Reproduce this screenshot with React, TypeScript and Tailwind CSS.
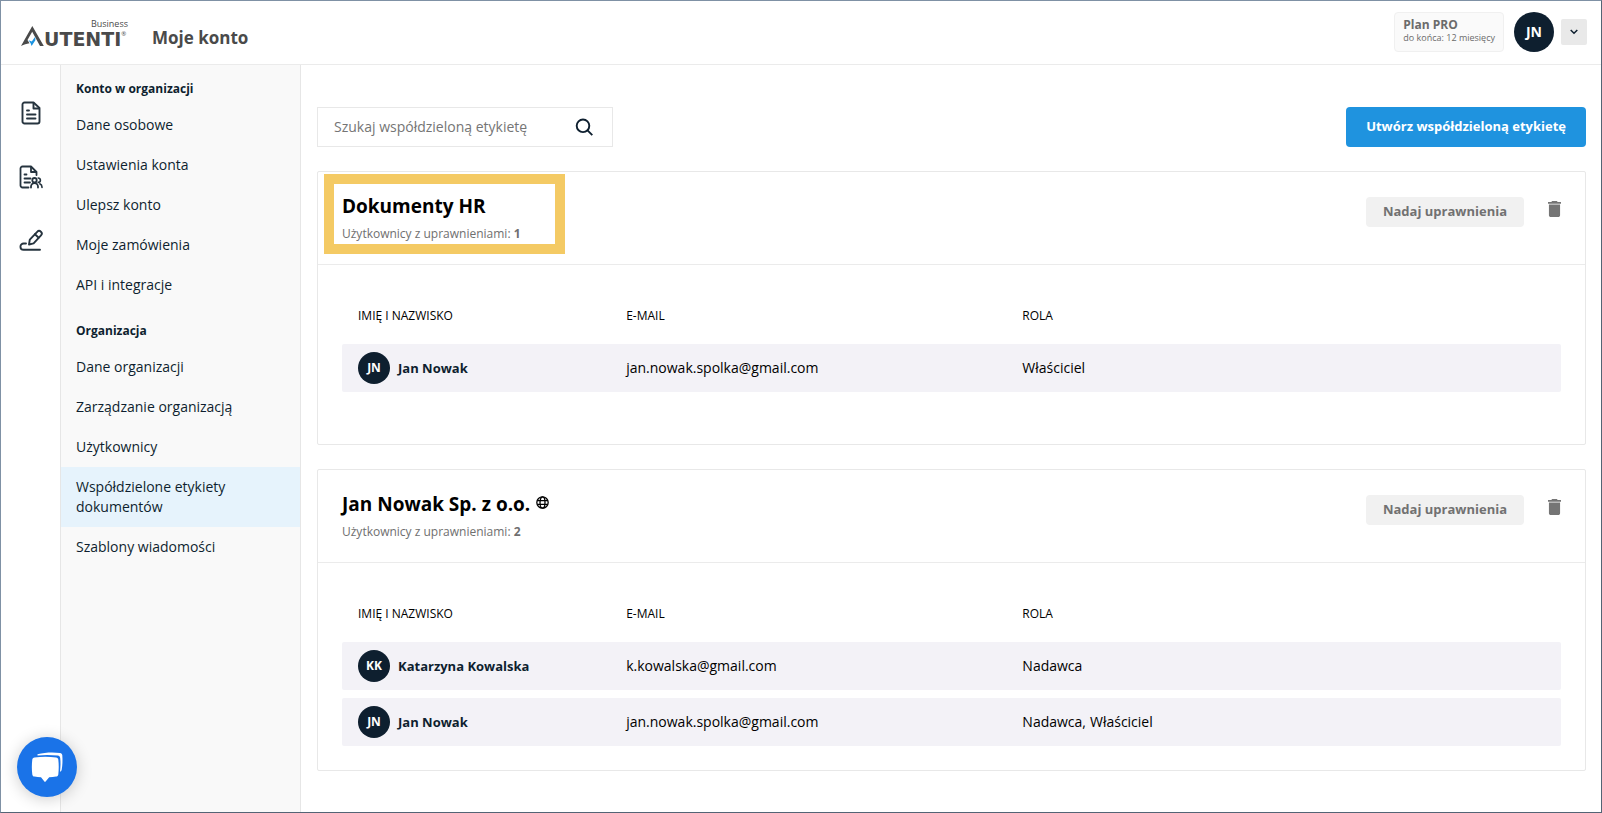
import { ReactNode } from "react";

type Member = { initials: string; name: string; email: string; role: ReactNode };

const accountLinks = ["Dane osobowe", "Ustawienia konta", "Ulepsz konto", "Moje zamówienia", "API i integracje"];

const organizationLinks = [
  "Dane organizacji",
  "Zarządzanie organizacją",
  "Użytkownicy",
  "Współdzielone etykiety dokumentów",
  "Szablony wiadomości",
];

const activeLink = "Współdzielone etykiety dokumentów";

const hrMembers: Member[] = [
  { initials: "JN", name: "Jan Nowak", email: "jan.nowak.spolka@gmail.com", role: "Właściciel" },
];

const companyMembers: Member[] = [
  { initials: "KK", name: "Katarzyna Kowalska", email: "k.kowalska@gmail.com", role: "Nadawca" },
  {
    initials: "JN",
    name: "Jan Nowak",
    email: "jan.nowak.spolka@gmail.com",
    role: (
      <span className="flex gap-1">
        <span>Nadawca,</span>
        <span>Właściciel</span>
      </span>
    ),
  },
];

function Logo() {
  return (
    <a href="#" aria-label="Autenti Business" className="flex flex-col w-[111px] text-[#4a4a4a]">
      <span className="self-end pr-1 text-[9px] leading-3">Business</span>
      <span className="flex items-end -mt-1">
        <svg viewBox="0 0 23 20" className="w-[23px] h-5" aria-hidden="true">
          <path d="M0 20 L11.300 0 L22.800 20 H19 L11.200 5.800 L6.500 14 L8.500 17.200 C5.500 17.600 3 18.600 0 20z" fill="#4a4a4a" />
          <path d="M7.600 14.300 L10.800 15.600 L14.200 10.800 L14.400 14.200 L10.600 20 L9.600 17.200z" fill="#1c93e0" />
        </svg>
        <span className="h-[17px] font-['DejaVu_Sans'] text-[19px] leading-5 font-bold">UTENTI</span>
        <sup className="self-start pt-2 text-[6px] leading-none">®</sup>
      </span>
    </a>
  );
}

function FileIcon() {
  return (
    <svg viewBox="0 0 20 24" className="w-5 h-6" fill="none" stroke="currentColor" strokeWidth="1.9" strokeLinejoin="round" strokeLinecap="round">
      <path d="M3.500 1.500h9L18.500 7v13.500a2 2 0 0 1-2 2h-13a2 2 0 0 1-2-2v-17a2 2 0 0 1 2-2z" />
      <path d="M12.500 2v5.500H18" />
      <path d="M6 9.500h2M6 13.500h8.500M6 17.500h8.500" />
    </svg>
  );
}

function FileUsersIcon() {
  return (
    <svg viewBox="0 0 24 24" className="w-6 h-6" fill="none" stroke="currentColor" strokeWidth="1.8" strokeLinejoin="round" strokeLinecap="round">
      <path d="M9.500 22.500H3.500a2 2 0 0 1-2-2v-17a2 2 0 0 1 2-2H12l5.500 5.500v3" />
      <path d="M12 2v5h5" />
      <path d="M5.500 9.500h2M5.500 13.500h6M5.500 17.500h5.500" />
      <circle cx="15.500" cy="15.200" r="2.200" />
      <path d="M12 22.500v-1a3.500 3.500 0 0 1 7 0v1" />
      <path d="M19.200 13a2.200 2.200 0 0 1 0 4.400M20.800 18.800a3.500 3.500 0 0 1 2.200 3.200v.5" strokeWidth="1.6" />
    </svg>
  );
}

function SignIcon() {
  return (
    <svg viewBox="0 0 24 24" className="w-6 h-6" fill="none" stroke="currentColor" strokeWidth="1.9" strokeLinejoin="round" strokeLinecap="round">
      <path d="M10 15.500l.8-4.800L18.200 2.800a2.600 2.600 0 0 1 3.800 3.600l-7.400 8z" />
      <path d="M15.900 5.200l3.800 3.500" />
      <path d="M7 14.500H4.600a3.100 3.100 0 0 0 0 6.300H21" />
    </svg>
  );
}

function TrashIcon() {
  return (
    <svg viewBox="5 3 14 18" className="w-[13px] h-4" fill="currentColor" preserveAspectRatio="none" aria-hidden="true">
      <path d="M6 19c0 1.100.9 2 2 2h8c1.100 0 2-.9 2-2V7H6v12zM19 4h-3.500l-1-1h-5l-1 1H5v2h14V4z" />
    </svg>
  );
}

function GlobeIcon() {
  return (
    <svg viewBox="0 0 24 24" className="w-[13px] h-[13px] mb-1" fill="none" stroke="currentColor" strokeWidth="2.4" aria-hidden="true">
      <circle cx="12" cy="12" r="10.500" />
      <ellipse cx="12" cy="12" rx="4.600" ry="10.500" />
      <path d="M2.500 8.500h19M2.500 15.500h19" />
    </svg>
  );
}

function SideNav({ title, links }: { title: string; links: string[] }) {
  return (
    <nav aria-label={title}>
      <h2 className="px-[15px] pt-3.5 pb-1.5 text-xs leading-5 font-bold">{title}</h2>
      <ul>
        {links.map((link) => (
          <li key={link} className={link === activeLink ? "bg-[#e6f3fc]" : ""}>
            <a href="#" className="block py-2.5 pl-[15px] pr-12 text-sm leading-5">
              {link}
            </a>
          </li>
        ))}
      </ul>
    </nav>
  );
}

type LabelCardProps = {
  title: string;
  count: number;
  members: Member[];
  shared?: boolean;
  highlighted?: boolean;
};

function LabelCard({ title, count, members, shared, highlighted }: LabelCardProps) {
  return (
    <section className="relative border border-[#e8e8e8] rounded-xs">
      {/* Highlight frame */}
      {highlighted && (
        <div className="absolute left-1.5 top-0.5 w-[241px] h-20 border-[10px] border-[#f4ca64] pointer-events-none"></div>
      )}

      <div className="flex items-start justify-between px-6 py-5 border-b border-[#ebebeb]">
        <div>
          <h2 className="flex items-center gap-1.5 text-[19px] leading-7 font-bold text-black">
            {title}
            {shared && <GlobeIcon />}
          </h2>
          <p className="mt-1 text-xs leading-5 text-[#6f6f6f]">
            Użytkownicy z uprawnieniami: <b className="font-bold">{count}</b>
          </p>
        </div>
        <div className="flex items-start gap-6 pt-[5px] text-[#717171]">
          <button className="h-[30px] px-[17px] rounded-sm bg-[#f1f1f1] text-[13px] font-bold">Nadaj uprawnienia</button>
          <button aria-label="Usuń" className="pt-1 text-[#757575]">
            <TrashIcon />
          </button>
        </div>
      </div>

      <div className="min-h-[179px] px-6 py-4">
        <table className="w-full mt-[7px] table-fixed border-separate border-spacing-x-0 border-spacing-y-2 text-sm text-black">
          <thead>
            <tr className="h-10 text-left text-xs">
              <th className="w-[22%] pl-4 font-normal">IMIĘ I NAZWISKO</th>
              <th className="w-[32.5%] pl-4 font-normal">E-MAIL</th>
              <th className="pl-4 font-normal">ROLA</th>
            </tr>
          </thead>
          <tbody>
            {members.map((member) => (
              <tr key={member.email} className="h-12 bg-[#f3f2f7]">
                <td className="pl-4 rounded-l-xs">
                  <span className="flex items-center gap-2 text-[13px] font-bold text-[#0e1f2f]">
                    <span className="flex items-center justify-center w-8 h-8 rounded-full bg-[#0e1f2f] text-xs text-white">
                      {member.initials}
                    </span>
                    {member.name}
                  </span>
                </td>
                <td className="pl-4">{member.email}</td>
                <td className="pl-4 rounded-r-xs">{member.role}</td>
              </tr>
            ))}
          </tbody>
        </table>
      </div>
    </section>
  );
}

export default function App() {
  return (
    <div className="flex flex-col min-h-screen border border-t-[#7f91a5] border-l-[#7f91a5] border-r-[#546475] border-b-[#546475] bg-white font-['Open_Sans',sans-serif] text-[#0e1f2f]">
      {/* Header */}
      <header className="flex items-center justify-between h-16 pl-5 pr-3.5 pb-0.5 border-b border-[#ebebeb]">
        <div className="flex items-center gap-5">
          <Logo />
          <h1 className="pt-3 text-[17px] leading-6 font-bold text-[#4a4a4a]">Moje konto</h1>
        </div>
        <div className="flex items-center">
          <div className="flex flex-col justify-center h-10 px-2 pb-0.5 border border-[#f0f0f0] rounded-sm bg-[#fafafa] text-[#6b6b6b]">
            <span className="text-xs leading-3.5 font-bold">Plan PRO</span>
            <span className="text-[9px] leading-3">do końca: 12 miesięcy</span>
          </div>
          <div className="flex items-center justify-center w-10 h-10 ml-2.5 rounded-full bg-[#0e1f2f] text-sm font-bold text-white">
            JN
          </div>
          <button aria-label="Menu konta" className="flex items-center justify-center w-[26px] h-[26px] ml-[7px] rounded-xs bg-[#e9e9e9]">
            <svg viewBox="0 0 8 6" className="w-2 h-1.5" fill="none" stroke="currentColor" strokeWidth="1.5">
              <path d="M.7 1l3.300 3.300L7.300 1" />
            </svg>
          </button>
        </div>
      </header>

      <div className="flex flex-1">
        {/* Icon rail */}
        <aside className="flex flex-col items-center gap-10 w-[60px] shrink-0 pt-9 border-r border-[#e6e6e6] text-[#26343f]">
          <a href="#" aria-label="Dokumenty"><FileIcon /></a>
          <a href="#" aria-label="Dokumenty współdzielone"><FileUsersIcon /></a>
          <a href="#" aria-label="Podpis"><SignIcon /></a>
        </aside>

        {/* Settings menu */}
        <aside className="flex flex-col gap-0.5 w-60 shrink-0 border-r border-[#e6e6e6] bg-[#f9f9f9]">
          <SideNav title="Konto w organizacji" links={accountLinks} />
          <SideNav title="Organizacja" links={organizationLinks} />
        </aside>

        <main className="flex-1 flex flex-col gap-6 pt-[42px] pl-4 pr-[15px] pb-10">
          <div className="flex items-center justify-between">
            <form className="flex items-center w-[296px] h-10 px-4 border border-[#e8e8e8]">
              <input
                type="search"
                aria-label="Szukaj współdzieloną etykietę"
                placeholder="Szukaj współdzieloną etykietę"
                className="flex-1 min-w-0 text-sm outline-none placeholder:text-[#757575]"
              />
              <button type="button" aria-label="Szukaj" className="pr-[3px]">
                <svg viewBox="0 0 18 18" className="w-[18px] h-[18px]" fill="none" stroke="currentColor" strokeWidth="1.9">
                  <circle cx="8" cy="7.800" r="6.300" />
                  <path d="M12.300 12.100l5 5" />
                </svg>
              </button>
            </form>
            <button className="h-10 px-5 rounded-sm bg-[#1f93df] text-[13px] font-bold text-white">
              Utwórz współdzieloną etykietę
            </button>
          </div>

          <LabelCard title="Dokumenty HR" count={1} members={hrMembers} highlighted />
          <LabelCard title="Jan Nowak Sp. z o.o." count={2} members={companyMembers} shared />
        </main>
      </div>

      {/* Chat launcher */}
      <button
        aria-label="Otwórz czat"
        className="fixed left-[17px] bottom-4 flex items-center justify-center w-[60px] h-[60px] rounded-full bg-[#1a73e8] shadow-[0_2px_16px_rgba(0,0,0,0.2)]"
      >
        <svg viewBox="0 0 32 30" className="w-8 h-[30px]" fill="#fff">
          <path d="M6.500 2.200C14 .2 22 0 29 .9c1.400.200 2.200 1 2.300 2.300.4 5 .2 10-.6 14.600-.2 1-.9 1.700-1.700 1.900.6-4.800.7-9.300.2-13.600-.2-1.500-1-2.300-2.500-2.500C20 2.700 13 2.600 6.500 3.600z" />
          <path d="M3.500 5.400c7.300-1 14.600-1 21.600 0 1.300.2 2 .9 2.200 2.200.6 5 .6 10 0 14.800-.2 1.300-.9 2-2.200 2.200-2.300.3-4.600.5-6.900.6l-3.600 4.300c-.4.500-.8.500-1.200 0L10 25.200c-2.200-.1-4.400-.3-6.500-.6-1.300-.2-2-.9-2.200-2.200-.6-4.800-.6-9.800 0-14.800.2-1.300.9-2 2.200-2.200z" />
        </svg>
      </button>
    </div>
  );
}
